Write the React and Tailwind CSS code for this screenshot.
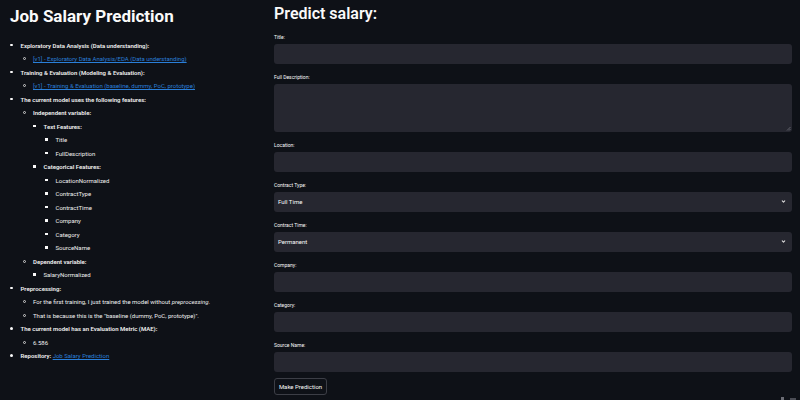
import { ChevronDown } from 'lucide-react';

const font = { fontFamily: 'Roboto, "Noto Sans", sans-serif' };

const rows = [
      { lvl: 1, bold: true, text: 'Exploratory Data Analysis (Data understanding):' },
      { lvl: 2, link: '[v1] - Exploratory Data Analysis/EDA (Data understanding)' },
      { lvl: 1, bold: true, text: 'Training & Evaluation (Modeling & Evaluation):' },
      { lvl: 2, link: '[v1] - Training & Evaluation (baseline, dummy, PoC, prototype)' },
      { lvl: 1, bold: true, text: 'The current model uses the following features:' },
      { lvl: 2, bold: true, text: 'Independent variable:' },
      { lvl: 3, bold: true, text: 'Text Features:' },
      { lvl: 4, text: 'Title' },
      { lvl: 4, text: 'FullDescription' },
      { lvl: 3, bold: true, text: 'Categorical Features:' },
      { lvl: 4, text: 'LocationNormalized' },
      { lvl: 4, text: 'ContractType' },
      { lvl: 4, text: 'ContractTime' },
      { lvl: 4, text: 'Company' },
      { lvl: 4, text: 'Category' },
      { lvl: 4, text: 'SourceName' },
      { lvl: 2, bold: true, text: 'Dependent variable:' },
      { lvl: 3, text: 'SalaryNormalized' },
      { lvl: 1, bold: true, text: 'Preprocessing:' },
      { lvl: 2, custom: 'pre' },
      { lvl: 2, text: 'That is because this is the "baseline (dummy, PoC, prototype)".' },
      { lvl: 1, bold: true, text: 'The current model has an Evaluation Metric (MAE):' },
      { lvl: 2, text: '6.586' },
      { lvl: 1, custom: 'repo' },
];

const pad = { 1: 'pl-[10px]', 2: 'pl-[22.5px]', 3: 'pl-[33px]', 4: 'pl-[45px]' };

function Bullet({ lvl }) {
      if (lvl === 1) return <span className="w-[2.5px] h-[2.5px] rounded-full bg-[#fafafa]" />;
      if (lvl === 2) return <span className="w-[3px] h-[3px] rounded-full border-[0.8px] border-[#d0d0d0]" />;
      return <span className="w-[2.5px] h-[2.5px] bg-[#fafafa]" />;
}

function Row({ r }) {
      let content;
      if (r.link) content = <a className="text-[#2a7fd8] underline underline-offset-[1px]">{r.link}</a>;
      else if (r.custom === 'pre')
            content = <span>For the first training, I just trained the model without <em>preprocessing</em>.</span>;
      else if (r.custom === 'repo')
            content = (
                  <span>
                        <span className="font-semibold">Repository:</span>{' '}
                        <a className="text-[#2a7fd8] underline underline-offset-[1px]">Job Salary Prediction</a>
                  </span>
            );
      else content = <span className={r.bold ? 'font-semibold' : ''}>{r.text}</span>;
      return (
            <div className={`flex items-center h-[13.5px] ${pad[r.lvl]}`}>
                  <div className="w-[10.5px] flex items-center shrink-0">
                        <Bullet lvl={r.lvl} />
                  </div>
                  <div className="whitespace-nowrap">{content}</div>
            </div>
      );
}

function Field({ label, tall, select }) {
      return (
            <div className="flex flex-col">
                  <div className="h-[8px] leading-[8px] text-[5px] mb-[3px]">{label}</div>
                  {tall ? (
                        <div className="relative h-[48px] rounded-[3px] bg-[#262730]">
                              <svg className="absolute right-[1px] bottom-[1px]" width="5" height="5" viewBox="0 0 5 5">
                                    <path d="M4.5 1 L1 4.5 M4.5 3 L3 4.5" stroke="#8a8b94" strokeWidth="0.6" />
                              </svg>
                        </div>
                  ) : (
                        <div className="h-[20px] rounded-[3px] bg-[#262730] flex items-center justify-between pl-[4px] pr-[6px] text-[6px]">
                              <span>{select}</span>
                              {select && <ChevronDown className="w-[5px] h-[5px] text-[#e0e0e0]" strokeWidth={5} />}
                        </div>
                  )}
            </div>
      );
}

export default function App() {
      return (
            <div className="relative w-[800px] h-[400px] overflow-hidden bg-[#0e1117] text-[#fafafa] flex" style={font}>
                  <div className="w-[274px] shrink-0">
                        <h1 className="pt-[6px] pl-[10px] h-[26px] text-[17px] leading-[20px] font-bold">Job Salary Prediction</h1>
                        <div className="mt-[12.25px] text-[6px] text-[#f0f0f0]">
                              {rows.map((r, i) => (
                                    <Row key={i} r={r} />
                              ))}
                        </div>
                  </div>
                  <div className="flex-1 pr-[8px] pt-[3.5px]">
                        <h2 className="h-[20px] text-[16px] leading-[20px] font-semibold mb-[9.2px]">Predict salary:</h2>
                        <div className="flex flex-col gap-[9px]">
                              <Field label="Title:" />
                              <Field label="Full Description:" tall />
                              <Field label="Location:" />
                              <Field label="Contract Type:" select="Full Time" />
                              <Field label="Contract Time:" select="Permanent" />
                              <Field label="Company:" />
                              <Field label="Category:" />
                              <Field label="Source Name:" />
                        </div>
                        <button className="mt-[6.3px] h-[17.5px] w-[53px] rounded-[3px] border border-[#3c3e46] text-[6px] flex items-center justify-center">
                              Make Prediction
                        </button>
                  </div>
                  <div className="absolute right-[4px] bottom-0 flex gap-[6px] items-end">
                        <span className="w-[3px] h-[3px] bg-[#6b6d75]" />
                        <span className="w-[6px] h-[2px] bg-[#4a4c54]" />
                  </div>
            </div>
      );
}
